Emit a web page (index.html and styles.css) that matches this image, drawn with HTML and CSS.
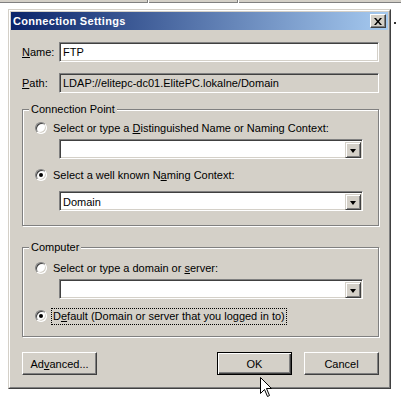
FILE: index.html
```html
<!DOCTYPE html>
<html>
<head>
<meta charset="utf-8">
<link rel="stylesheet" href="styles.css">
</head>
<body>
<div class="taskstrip"><span class="sep s1"></span><span class="sep s2"></span></div>
<div class="stage">
  <div class="dialog">
    <div class="frame">
      <div class="titlebar">
        <span class="title">Connection Settings</span>
        <span class="closebtn"><svg width="8" height="7" viewBox="0 0 8 7"><path d="M0 0h2l2 2.5L6 0h2L5 3.5 8 7H6L4 4.5 2 7H0l3-3.5z" fill="#000"/></svg></span>
      </div>
      <div class="content">
        <div class="row">
          <span class="lbl"><u>N</u>ame:</span>
          <div class="field">FTP</div>
        </div>
        <div class="row path-row">
          <span class="lbl"><u>P</u>ath:</span>
          <div class="field ro">LDAP://elitepc-dc01.ElitePC.lokalne/Domain</div>
        </div>

        <fieldset class="group g1">
          <legend>Connection Point</legend>
          <div class="radio-row"><span class="radio"></span><span class="rlabel">Select or type a <u>D</u>istinguished Name or Naming Context:</span></div>
          <div class="combo c1"><div class="ctext"></div><span class="dd"><span class="tri"></span></span></div>
          <div class="radio-row r2"><span class="radio on"></span><span class="rlabel">Select a well known N<u>a</u>ming Context:</span></div>
          <div class="combo c2"><div class="ctext">Domain</div><span class="dd"><span class="tri"></span></span></div>
        </fieldset>

        <fieldset class="group g2">
          <legend>Computer</legend>
          <div class="radio-row"><span class="radio"></span><span class="rlabel">Select or type a domain or <u>s</u>erver:</span></div>
          <div class="combo c3"><div class="ctext"></div><span class="dd"><span class="tri"></span></span></div>
          <div class="radio-row r4"><span class="radio on"></span><span class="rlabel focus">D<u>e</u>fault (Domain or server that you logged in to)</span></div>
        </fieldset>

        <div class="buttons">
          <span class="btn">Ad<u>v</u>anced...</span>
          <span class="spacer"></span>
          <span class="btn default">OK</span>
          <span class="btn">Cancel</span>
        </div>
      </div>
    </div>
  </div>
  <span class="dot"></span>
</div>
<svg class="cursor" width="13" height="21" viewBox="0 0 13 21"><path d="M0.5 0.5V16.5L4.5 12.5L7.5 19.5L9.5 18.5L6.5 11.5H11.5Z" fill="#fff" stroke="#000" stroke-width="1"/></svg>
</body>
</html>
```
FILE: styles.css
```css
* { box-sizing: border-box; }
html, body { margin: 0; padding: 0; }
body {
  width: 401px;
  height: 398px;
  background: #fff;
  font-family: "Liberation Sans", Arial, sans-serif;
  font-size: 11px;
  color: #000;
  position: relative;
  overflow: hidden;
}
u { text-decoration: underline; text-underline-offset: 1px; }

.taskstrip {
  height: 3px;
  background: #D4D0C8;
  border-bottom: 1px solid #808080;
  position: relative;
}
.sep { position: absolute; top: 0; width: 2px; height: 3px; border-left: 1px solid #808080; border-right: 1px solid #fff; }
.s1 { left: 147px; }
.s2 { left: 237px; }

.stage {
  display: flex;
  align-items: flex-start;
  padding: 6px 0 0 8px;
}
.dialog {
  width: 383px;
  height: 380px;
  background: #D4D0C8;
  border-style: solid;
  border-width: 1px;
  border-color: #D4D0C8 #404040 #404040 #D4D0C8;
}
.frame {
  height: 100%;
  border-style: solid;
  border-width: 1px;
  border-color: #fff #808080 #808080 #fff;
  padding: 1px;
}
.dot {
  width: 2px;
  height: 2px;
  background: #333;
  margin: 13px 0 0 3px;
}

.titlebar {
  height: 18px;
  background: linear-gradient(to right, #0A246A, #A6CAF0);
  display: flex;
  align-items: center;
  justify-content: space-between;
  padding: 0 2px 0 2px;
}
.title {
  color: #fff;
  font-weight: bold;
  font-size: 11px;
  letter-spacing: 0.3px;
}
.closebtn {
  width: 16px;
  height: 14px;
  background: #D4D0C8;
  border-style: solid;
  border-width: 1px;
  border-color: #fff #404040 #404040 #fff;
  box-shadow: inset -1px -1px 0 #808080;
  display: flex;
  align-items: center;
  justify-content: center;
}

.content {
  padding: 12px 9px 0 11px;
}
.row {
  display: flex;
  align-items: center;
  height: 20px;
}
.path-row { margin-top: 11px; }
.lbl { width: 37px; }
.field {
  flex: 1;
  height: 20px;
  background: #fff;
  border-style: solid;
  border-width: 1px;
  border-color: #808080 #fff #fff #808080;
  box-shadow: inset 1px 1px 0 #404040, inset -1px -1px 0 #D4D0C8;
  padding: 0 3px;
  line-height: 18px;
  white-space: nowrap;
}
.field.ro { background: #D4D0C8; }

.group {
  margin: 10px 0 0 0;
  width: 357px;
  border: 1px solid #808080;
  box-shadow: inset 1px 1px 0 #fff, 1px 1px 0 #fff;
  padding: 4px 15px 14px 0;
}
.group legend {
  margin-left: 6px;
  padding: 0 2px;
  line-height: 13px;
  background: #D4D0C8;
}
.g2 { margin-top: 15px; padding-top: 6px; padding-bottom: 12px; }

.radio-row {
  display: flex;
  align-items: center;
  height: 16px;
  margin-left: 12px;
}
.r2 { margin-top: 8px; }
.r4 { margin-top: 9px; }
.radio {
  width: 12px;
  height: 12px;
  border-radius: 50%;
  background: #fff;
  border-style: solid;
  border-width: 1px;
  border-color: #808080 #fff #fff #808080;
  box-shadow: inset 1px 1px 0 #404040, inset -1px -1px 0 #D4D0C8;
  position: relative;
  flex: none;
}
.radio.on::after {
  content: "";
  position: absolute;
  left: 3px;
  top: 3px;
  width: 4px;
  height: 4px;
  border-radius: 50%;
  background: #000;
}
.rlabel {
  margin-left: 4px;
  padding: 1px 1px;
  border: 1px dotted transparent;
  line-height: 13px;
  white-space: nowrap;
}
.rlabel.focus { border-color: #000; }

.combo {
  display: flex;
  margin: 3px 0 0 36px;
  width: 304px;
  height: 20px;
  background: #fff;
  border-style: solid;
  border-width: 1px;
  border-color: #808080 #fff #fff #808080;
  box-shadow: inset 1px 1px 0 #404040, inset -1px -1px 0 #D4D0C8;
  padding: 2px 1px 2px 2px;
}
.c2 { margin-top: 8px; }
.ctext {
  flex: 1;
  line-height: 16px;
  padding-left: 1px;
}
.dd {
  width: 16px;
  height: 16px;
  background: #D4D0C8;
  border-style: solid;
  border-width: 1px;
  border-color: #D4D0C8 #404040 #404040 #D4D0C8;
  box-shadow: inset 1px 1px 0 #fff, inset -1px -1px 0 #808080;
  display: flex;
  align-items: center;
  justify-content: center;
}
.tri {
  width: 0;
  height: 0;
  border-left: 3.5px solid transparent;
  border-right: 3.5px solid transparent;
  border-top: 4px solid #000;
  margin-top: 1px;
}

.buttons {
  display: flex;
  margin-top: 15px;
  gap: 12px;
  width: 357px;
}
.spacer { flex: 1; }
.btn {
  width: 75px;
  height: 23px;
  background: #D4D0C8;
  border-style: solid;
  border-width: 1px;
  border-color: #fff #404040 #404040 #fff;
  box-shadow: inset -1px -1px 0 #808080, inset 1px 1px 0 #D4D0C8;
  display: flex;
  align-items: center;
  justify-content: center;
}
.btn.default {
  border-color: #000;
  box-shadow: inset 1px 1px 0 #fff, inset -1px -1px 0 #404040, inset -2px -2px 0 #808080;
}

.cursor {
  position: absolute;
  left: 260px;
  top: 377px;
}
```
